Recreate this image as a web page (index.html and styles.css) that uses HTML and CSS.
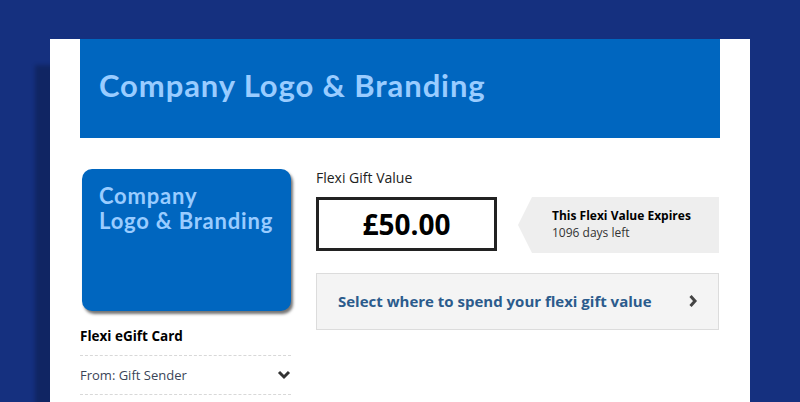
FILE: index.html
```html
<!DOCTYPE html>
<html>
<head>
<meta charset="utf-8">
<link rel="stylesheet" href="styles.css">
</head>
<body>
<div class="page">
  <header class="brand">
    <h1 class="brand-title">Company Logo &amp; Branding</h1>
  </header>
  <main class="content">
    <aside class="side">
      <div class="card">
        <div class="card-title">Company<br>Logo &amp; Branding</div>
      </div>
      <div class="card-name">Flexi eGift Card</div>
      <div class="row">
        <span class="row-text">From: Gift Sender</span>
        <svg class="chev-down" width="14" height="10" viewBox="0 0 14 10"><path d="M2 2 L7 7 L12 2" fill="none" stroke="#333" stroke-width="3"/></svg>
      </div>
    </aside>
    <section class="main-col">
      <div class="label">Flexi Gift Value</div>
      <div class="value-row">
        <div class="value-box">£50.00</div>
        <div class="expiry">
          <div class="expiry-title">This Flexi Value Expires</div>
          <div class="expiry-sub">1096 days left</div>
        </div>
      </div>
      <div class="select-btn">
        <span class="select-text">Select where to spend your flexi gift value</span>
        <svg class="chev-right" width="10" height="14" viewBox="0 0 10 14"><path d="M2.5 2 L7 7 L2.5 12" fill="none" stroke="#444" stroke-width="3"/></svg>
      </div>
    </section>
  </main>
</div>
</body>
</html>
```

FILE: styles.css
```css
html, body {
  margin: 0;
  padding: 0;
}
body {
  background: #15307f;
  height: 402px;
  overflow: hidden;
  font-family: "Open Sans", "Liberation Sans", sans-serif;
}
.page {
  margin: 39px 50px 0;
  background: #fff;
  padding: 0 30px;
  height: 363px;
  box-shadow: -15px 26px 4px rgba(0, 0, 0, 0.22);
}
.brand {
  background: #0066bf;
  height: 99px;
  display: flex;
  align-items: center;
  padding-left: 19px;
}
.brand-title {
  margin: 0;
  color: #99ccff;
  font-family: "Lato", sans-serif;
  font-weight: bold;
  font-size: 31px;
  letter-spacing: 0.9px;
  padding-bottom: 8px;
}
.content {
  display: flex;
  padding-top: 31px;
}
.side {
  width: 211px;
}
.card {
  margin-left: 2px;
  width: 209px;
  height: 142px;
  background: #0066bf;
  border-radius: 10px;
  box-shadow: 2px 3px 3px rgba(0, 0, 0, 0.55);
  box-sizing: border-box;
  padding: 14px 17px 13px;
}
.card-title {
  color: #99ccff;
  font-family: "Lato", sans-serif;
  font-weight: bold;
  font-size: 22px;
  letter-spacing: 0.8px;
  line-height: 25px;
}
.card-name {
  margin-top: 15px;
  font-weight: bold;
  font-size: 13.5px;
  color: #000;
  line-height: 20px;
  padding-bottom: 9px;
  border-bottom: 1px dashed #d8d8d8;
}
.row {
  display: flex;
  justify-content: space-between;
  align-items: center;
  height: 38px;
  border-bottom: 1px dashed #d8d8d8;
}
.row-text {
  font-size: 13px;
  color: #3a4557;
}
.main-col {
  margin-left: 25px;
  width: 403px;
}
.label {
  font-size: 14px;
  color: #222;
  line-height: 20px;
  margin-top: -1px;
}
.value-row {
  display: flex;
  margin-top: 9px;
}
.value-box {
  width: 181px;
  height: 54px;
  box-sizing: border-box;
  border: 3px solid #222;
  display: flex;
  align-items: center;
  justify-content: center;
  font-weight: bold;
  font-size: 28px;
  color: #000;
}
.expiry {
  margin-left: 21px;
  width: 201px;
  height: 56px;
  background: #eeeeee;
  clip-path: polygon(14px 0, 100% 0, 100% 100%, 14px 100%, 0 50%);
  box-sizing: border-box;
  padding: 10px 0 0 34px;
}
.expiry-title {
  font-weight: bold;
  font-size: 12px;
  color: #000;
  line-height: 18px;
}
.expiry-sub {
  font-size: 12px;
  color: #333;
  line-height: 16px;
}
.select-btn {
  margin-top: 20px;
  height: 57px;
  box-sizing: border-box;
  background: #f4f4f4;
  border: 1px solid #dcdcdc;
  display: flex;
  align-items: center;
  justify-content: space-between;
  padding: 0 20px 2px 21px;
}
.select-text {
  font-weight: bold;
  font-size: 15px;
  color: #2b5b8c;
}
```
